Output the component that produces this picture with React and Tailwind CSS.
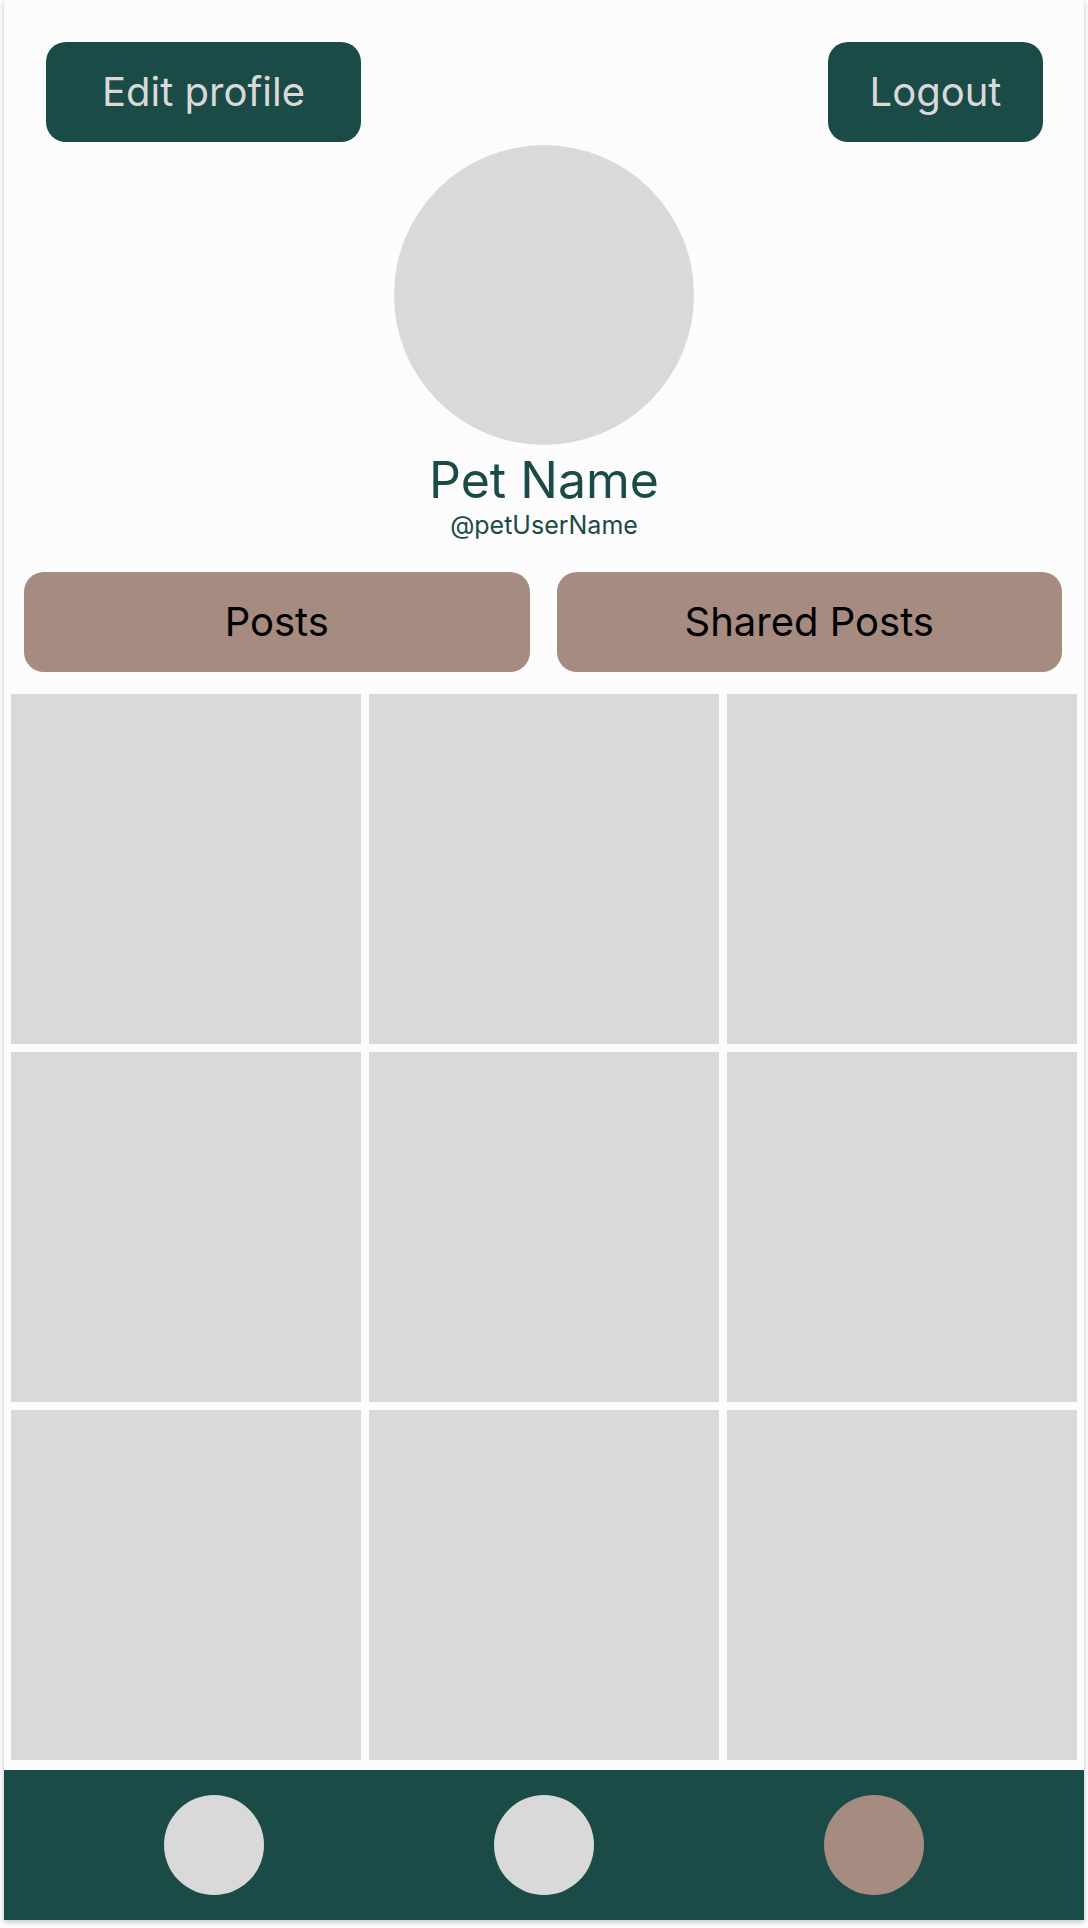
export default function App() {
    const tiles = Array.from({ length: 9 });

    return (
        <div className="min-h-screen bg-white" style={{ fontFamily: "Inter, 'Noto Sans', sans-serif" }}>
            <div className="mx-[4px] w-[1080px] bg-[#fcfcfc] shadow-[0_2px_6px_rgba(0,0,0,0.25)] flex flex-col">
                {/* Top buttons */}
                <div className="flex justify-between pl-[42px] pr-[41px] pt-[42px]">
                    <button className="w-[315px] h-[100px] rounded-[20px] bg-[#1a4b46] text-[#d9d9d9] text-[40px] leading-none">
                        Edit profile
                    </button>
                    <button className="w-[215px] h-[100px] rounded-[20px] bg-[#1a4b46] text-[#d9d9d9] text-[40px] leading-none">
                        Logout
                    </button>
                </div>

                {/* Avatar + names */}
                <div className="flex flex-col items-center mt-[3px]">
                    <div className="w-[300px] h-[300px] rounded-full bg-[#d9d9d9]"></div>
                    <p className="mt-[5px] text-[50px] leading-[60px] text-[#1a4b46]">Pet Name</p>
                    <p className="text-[25px] leading-[30px] text-[#1a4b46]">@petUserName</p>
                </div>

                {/* Tabs */}
                <div className="flex gap-[27px] pl-[20px] pr-[22px] mt-[32px]">
                    <button className="flex-1 h-[100px] rounded-[20px] bg-[#a58b80] text-black text-[40px] leading-none">
                        Posts
                    </button>
                    <button className="flex-1 h-[100px] rounded-[20px] bg-[#a58b80] text-black text-[40px] leading-none">
                        Shared Posts
                    </button>
                </div>

                {/* Grid */}
                <div className="grid grid-cols-3 gap-[8px] px-[7px] mt-[22px]">
                    {tiles.map((_, i) => (
                        <div key={i} className="h-[350px] bg-[#d9d9d9]"></div>
                    ))}
                </div>

                {/* Bottom nav */}
                <div className="mt-[10px] h-[150px] bg-[#1a4b46] flex items-center justify-between px-[160px]">
                    <div className="w-[100px] h-[100px] rounded-full bg-[#d9d9d9]"></div>
                    <div className="w-[100px] h-[100px] rounded-full bg-[#d9d9d9]"></div>
                    <div className="w-[100px] h-[100px] rounded-full bg-[#a58b80]"></div>
                </div>
            </div>
        </div>
    );
}
